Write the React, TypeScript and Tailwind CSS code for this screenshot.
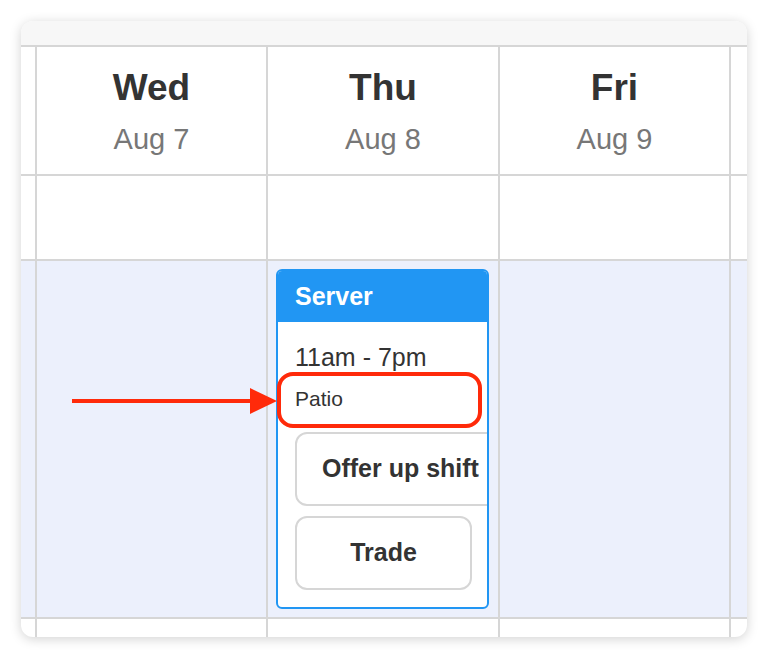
import React from "react";

const line = "border-[#d6d6d6]";

function HeaderCell({ day, date, last }: { day: string; date: string; last?: boolean }) {
  return (
    <div className={`flex flex-col items-center border-b-2 ${last ? "" : "border-r-2"} ${line} pt-[19px]`}>
      <div className="text-[37px] leading-[44px] font-bold text-[#333]">{day}</div>
      <div className="mt-[12px] text-[29px] leading-[34px] text-[#777]">{date}</div>
    </div>
  );
}

export default function App() {
  const cell = `border-b-2 border-r-2 ${line}`;
  const cellLast = `border-b-2 ${line}`;
  const blue = "bg-[#ecf0fc]";
  return (
    <div
      className="w-[768px] h-[658px] bg-white p-[21px]"
      style={{ fontFamily: '"Liberation Sans", Arial, sans-serif' }}
    >
      <div className="relative h-[616px] rounded-[12px] overflow-hidden bg-white shadow-[0_2px_12px_rgba(0,0,0,0.18)] flex flex-col">
        <div className={`h-[26px] shrink-0 bg-[#f7f7f7] border-b-2 ${line}`} />
        <div className="grid flex-1 grid-cols-[16px_231px_232px_231px_1fr] grid-rows-[129px_85px_358px_1fr]">
          {/* header row */}
          <div className={cell} />
          <HeaderCell day="Wed" date="Aug 7" />
          <HeaderCell day="Thu" date="Aug 8" />
          <HeaderCell day="Fri" date="Aug 9" />
          <div className={cellLast} />

          {/* row 1 */}
          <div className={cell} />
          <div className={cell} />
          <div className={cell} />
          <div className={cell} />
          <div className={cellLast} />

          {/* row 2 */}
          <div className={`${cell} ${blue}`} />
          <div className={`${cell} ${blue}`} />
          <div className={`${cell} ${blue} p-[8px] pr-[9px]`}>
            <div className="h-full flex flex-col border-2 border-[#2196f3] rounded-[6px] overflow-hidden bg-white">
              <div className="h-[51px] shrink-0 bg-[#2196f3] flex items-center pl-[17px] text-white font-bold text-[25px]">
                Server
              </div>
              <div className="flex flex-col items-start pl-[17px] pt-[20px]">
                <div className="text-[25px] leading-[30px] text-[#333]">11am - 7pm</div>
                <div className="mt-[14px] text-[21px] leading-[26px] text-[#333]">Patio</div>
                <button className="mt-[20px] h-[74px] shrink-0 whitespace-nowrap border-2 border-[#d6d6d6] rounded-[12px] px-[25px] text-[25px] font-bold text-[#333] bg-white">
                  Offer up shift
                </button>
                <button className="mt-[10px] h-[74px] w-[177px] border-2 border-[#d6d6d6] rounded-[12px] text-[25px] font-bold text-[#333] bg-white">
                  Trade
                </button>
              </div>
            </div>
          </div>
          <div className={`${cell} ${blue}`} />
          <div className={`${cellLast} ${blue}`} />

          {/* row 3 */}
          <div className={`border-r-2 ${line}`} />
          <div className={`border-r-2 ${line}`} />
          <div className={`border-r-2 ${line}`} />
          <div className={`border-r-2 ${line}`} />
          <div />
        </div>

        {/* annotation: red rounded rectangle */}
        <div className="absolute left-[256px] top-[351px] w-[205px] h-[56px] border-4 border-[#ff2a0a] rounded-[16px]" />
        {/* annotation: arrow */}
        <svg className="absolute left-[51px] top-[366px]" width="206" height="28" viewBox="0 0 206 28">
          <line x1="0" y1="14" x2="182" y2="14" stroke="#ff2a0a" strokeWidth="4" />
          <polygon points="178,1 205,14 178,27" fill="#ff2a0a" />
        </svg>
      </div>
    </div>
  );
}
